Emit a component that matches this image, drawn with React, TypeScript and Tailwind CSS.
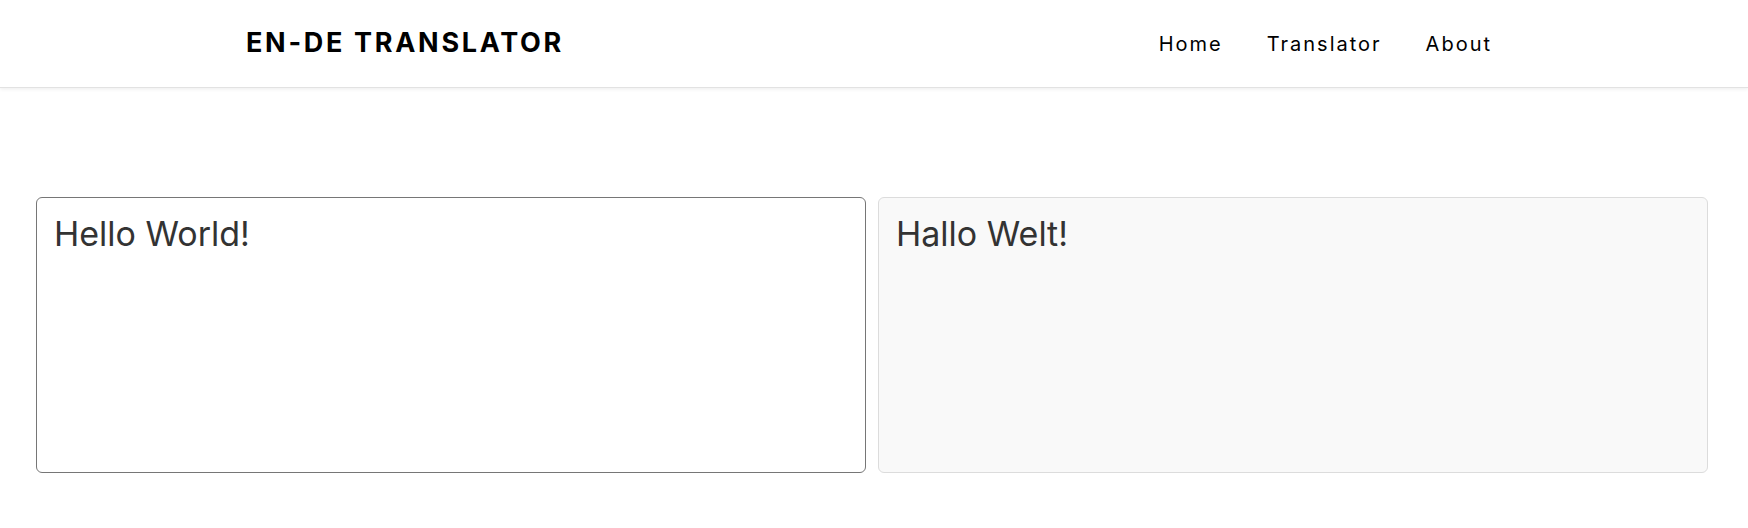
export default function App() {
  return (
    <div className="min-h-screen bg-white font-['Inter',sans-serif] text-black">
      <header className="flex h-[88px] items-center justify-between border-b border-[#e2e2e2] bg-white pl-[246px] pr-[256px] shadow-[0_1px_4px_rgba(0,0,0,0.08)]">
        <h1 className="text-[27px] font-bold tracking-[0.1em]">EN-DE TRANSLATOR</h1>
        <nav className="flex gap-[44px] text-[20px] tracking-[0.1em]">
          <a href="#">Home</a>
          <a href="#">Translator</a>
          <a href="#">About</a>
        </nav>
      </header>
      <main className="flex gap-3 pl-9 pt-[109px]">
        <textarea
          defaultValue="Hello World!"
          className="h-[276px] w-[830px] resize-none rounded-md border border-[#767676] bg-white px-[17px] pt-[10px] pb-3 font-['Inter',sans-serif] text-[34px] text-[#333] outline-none"
        />
        <textarea
          readOnly
          defaultValue="Hallo Welt!"
          className="h-[276px] w-[830px] resize-none rounded-md border border-[#dcdcdc] bg-[#f9f9f9] px-[17px] pt-[10px] pb-3 font-['Inter',sans-serif] text-[34px] text-[#333] outline-none"
        />
      </main>
    </div>
  );
}
